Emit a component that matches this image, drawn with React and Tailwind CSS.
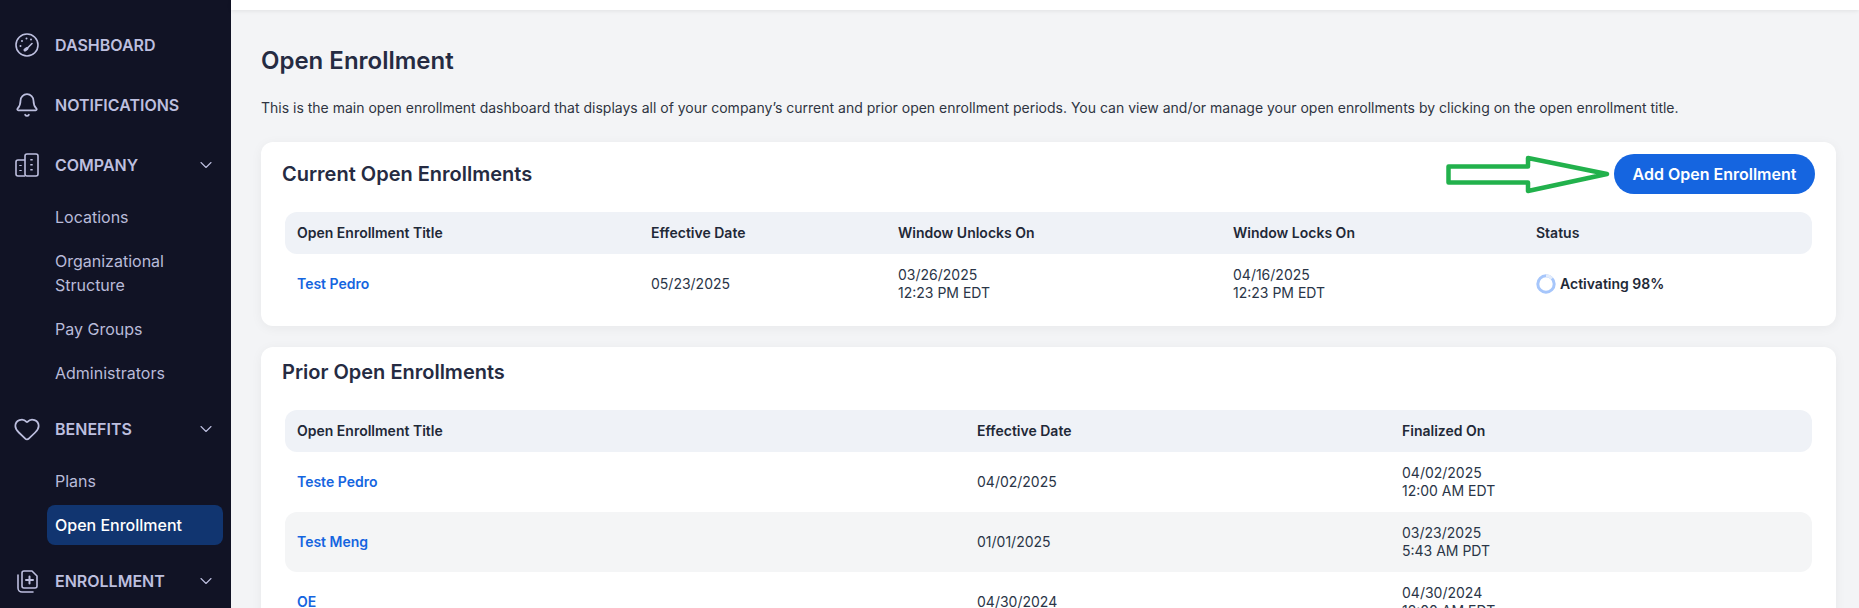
import { Bell, ChevronDown, Heart } from 'lucide-react'

const CURRENT_COLS = 'grid grid-cols-[354px_247px_335px_303px_1fr] items-center pl-3'
const PRIOR_COLS = 'grid grid-cols-[680px_425px_1fr] items-center pl-3'

const PRIOR = [
  { title: 'Teste Pedro', date: '04/02/2025', day: '04/02/2025', time: '12:00 AM EDT' },
  { title: 'Test Meng', date: '01/01/2025', day: '03/23/2025', time: '5:43 AM PDT', shaded: true },
  { title: 'OE', date: '04/30/2024', day: '04/30/2024', time: '12:00 AM EDT' },
]

function GaugeIcon() {
  return (
    <svg className="size-6" viewBox="0 0 24 24" fill="none" stroke="currentColor" strokeWidth="1.6" strokeLinecap="round">
      <circle cx="12" cy="12" r="11" />
      <path d="M11 16.5L17 10.5" />
      <path d="M10 17l2-1.5" strokeWidth="3" />
      <path d="M5.5 13v.01M7 8v.01M11.5 5.5v.01M16 6.5v.01" strokeWidth="2" />
    </svg>
  )
}

function CompanyIcon() {
  return (
    <svg className="size-6" viewBox="0 0 24 24" fill="none" stroke="currentColor" strokeWidth="1.6" strokeLinejoin="round">
      <rect x="10" y="1" width="13" height="22" rx="2" />
      <path d="M10 7H3a2 2 0 0 0-2 2v12a2 2 0 0 0 2 2h7" />
      <path d="M16.5 6v1.5M16.5 11v1.5M16.5 16v1.5M5.5 12v1M5.5 17v1" strokeWidth="2.4" />
    </svg>
  )
}

function EnrollmentIcon() {
  return (
    <svg className="size-6" viewBox="0 0 24 24" fill="none" stroke="currentColor" strokeWidth="1.6" strokeLinecap="round" strokeLinejoin="round">
      <path d="M3 6v13a4 4 0 0 0 4 4h11" />
      <path d="M7 4a2 2 0 0 1 2-2h8l5 5v10a2 2 0 0 1-2 2H9a2 2 0 0 1-2-2z" />
      <path d="M14.5 7.5v7M11 11h7" strokeWidth="2" />
    </svg>
  )
}

function NavHead({ icon, label, chevron, className = '' }) {
  return (
    <div className={`flex h-6 items-center pl-[15px] pr-[15px] text-[#bdbfdf] ${className}`}>
      <span className="w-10 shrink-0">{icon}</span>
      <span className="text-base font-semibold">{label}</span>
      {chevron && <ChevronDown className="ml-auto size-5" strokeWidth={1.3} />}
    </div>
  )
}

function NavSub({ children, active, className = '' }) {
  return (
    <div
      className={`ml-[47px] mr-2 rounded-lg px-2 py-2 text-base leading-6 ${
        active ? 'bg-[#113570] font-medium text-white' : 'text-[#b9bbd9]'
      } ${className}`}
    >
      {children}
    </div>
  )
}

function Sidebar() {
  return (
    <aside className="h-full w-[231px] shrink-0 bg-[#111325] pt-[33px]">
      <NavHead icon={<GaugeIcon />} label="DASHBOARD" />
      <NavHead icon={<Bell className="size-[26px] -ml-px" strokeWidth={1.6} />} label="NOTIFICATIONS" className="mt-9" />
      <NavHead icon={<CompanyIcon />} label="COMPANY" chevron className="mt-9" />
      <NavSub className="mt-5">Locations</NavSub>
      <NavSub className="mt-1">Organizational Structure</NavSub>
      <NavSub className="mt-1">Pay Groups</NavSub>
      <NavSub className="mt-1">Administrators</NavSub>
      <NavHead icon={<Heart className="size-7 -ml-0.5" strokeWidth={1.5} />} label="BENEFITS" chevron className="mt-6" />
      <NavSub className="mt-5">Plans</NavSub>
      <NavSub active className="mt-1">Open Enrollment</NavSub>
      <NavHead icon={<EnrollmentIcon />} label="ENROLLMENT" chevron className="mt-6" />
    </aside>
  )
}

function TimeCell({ day, time }) {
  return (
    <div className="text-sm leading-[18px] text-[#2a3547]">
      <div>{day}</div>
      <div>{time}</div>
    </div>
  )
}

function HeaderRow({ cols, labels }) {
  return (
    <div className={`${cols} mx-6 h-[42px] rounded-xl bg-[#eff2f7] text-sm font-semibold text-[#1f2937]`}>
      {labels.map((l) => (
        <div key={l}>{l}</div>
      ))}
    </div>
  )
}

function Spinner() {
  return (
    <svg className="mr-1 size-5" viewBox="0 0 20 20" fill="none">
      <circle cx="10" cy="10" r="8.2" stroke="#a6c6fb" strokeWidth="3" />
      <path d="M10 1.8a8.2 8.2 0 0 1 6 2.6" stroke="#e3ecfb" strokeWidth="3" />
    </svg>
  )
}

function Arrow() {
  return (
    <svg className="absolute left-[1185px] top-[13px]" width="165" height="40" viewBox="0 0 165 40" fill="none">
      <path
        d="M2.5 11.5H82V3L161 19L82 36V27.5H2.5Z"
        stroke="#22b14c"
        strokeWidth="4.5"
        strokeLinejoin="round"
        fill="#fff"
      />
    </svg>
  )
}

export default function App() {
  return (
    <div className="flex h-[608px] w-full overflow-hidden bg-[#f3f4f6] font-['Inter',sans-serif]">
      <Sidebar />
      <main className="relative min-w-0 flex-1">
        <div className="h-[10px] bg-white shadow-[0_1px_4px_rgba(0,0,0,0.08)]" />
        <div className="pl-[30px] pr-[23px]">
          <h1 className="mt-[33px] text-2xl leading-9 font-semibold text-[#252b42]">Open Enrollment</h1>
          <p className="mt-[17px] text-sm leading-6 whitespace-nowrap text-[#2f3542]">
            This is the main open enrollment dashboard that displays all of your company’s current and prior open
            enrollment periods. You can view and/or manage your open enrollments by clicking on the open enrollment
            title.
          </p>

          <section className="relative mt-[22px] h-[184px] rounded-xl bg-white pt-3 shadow-[0_2px_12px_rgba(0,0,0,0.05)]">
            <div className="flex h-10 items-center px-[21px]">
              <h2 className="text-xl font-semibold text-[#252b42]">Current Open Enrollments</h2>
              <Arrow />
              <button className="ml-auto h-10 w-[201px] rounded-full bg-[#1565e0] text-base font-semibold text-white">
                Add Open Enrollment
              </button>
            </div>
            <div className="mt-[18px]">
              <HeaderRow
                cols={CURRENT_COLS}
                labels={['Open Enrollment Title', 'Effective Date', 'Window Unlocks On', 'Window Locks On', 'Status']}
              />
              <div className={`${CURRENT_COLS} mx-6 h-[60px]`}>
                <a className="text-sm font-semibold text-[#1565e0]">Test Pedro</a>
                <div className="text-sm text-[#2a3547]">05/23/2025</div>
                <TimeCell day="03/26/2025" time="12:23 PM EDT" />
                <TimeCell day="04/16/2025" time="12:23 PM EDT" />
                <div className="flex items-center text-sm font-semibold text-[#1f2937]">
                  <Spinner />
                  Activating 98%
                </div>
              </div>
            </div>
          </section>

          <section className="mt-[21px] rounded-xl bg-white pt-[13px] pb-6 shadow-[0_2px_12px_rgba(0,0,0,0.05)]">
            <h2 className="pl-[21px] text-xl leading-6 font-semibold text-[#252b42]">Prior Open Enrollments</h2>
            <div className="mt-[26px]">
              <HeaderRow cols={PRIOR_COLS} labels={['Open Enrollment Title', 'Effective Date', 'Finalized On']} />
              {PRIOR.map((r) => (
                <div key={r.title} className={`${PRIOR_COLS} mx-6 h-[60px] rounded-xl ${r.shaded ? 'bg-[#f4f5f6]' : ''}`}>
                  <a className="text-sm font-semibold text-[#1565e0]">{r.title}</a>
                  <div className="text-sm text-[#2a3547]">{r.date}</div>
                  <TimeCell day={r.day} time={r.time} />
                </div>
              ))}
            </div>
          </section>
        </div>
      </main>
    </div>
  )
}
